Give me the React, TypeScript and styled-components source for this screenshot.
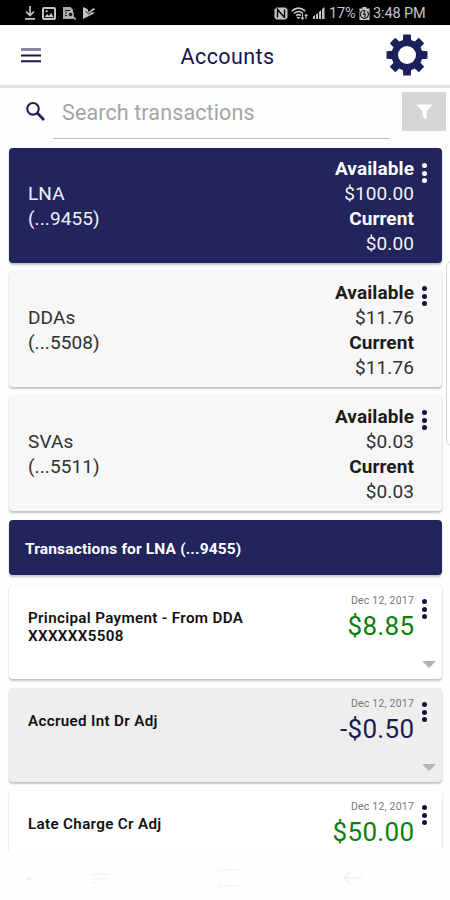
import React from "react";
import styled, { createGlobalStyle, css } from "styled-components";

const navy = "#22245c";
const ink = "#17164a";

const GlobalStyle = createGlobalStyle`
  * { box-sizing: border-box; }
  body { margin: 0; background: #fefefe; font-family: Roboto, "Liberation Sans", sans-serif; }
`;

const Screen = styled.div`
  width: 450px;
  height: 900px;
  display: flex;
  flex-direction: column;
  position: relative;
  overflow: hidden;
  background: #fefefe;
`;

const StatusBar = styled.div`
  height: 25px;
  flex: none;
  background: #000;
  color: #c4c4c4;
  display: flex;
  justify-content: space-between;
  padding: 1px 24px 0 25px;
`;

const StatusGroup = styled.div<{ $gap: number }>`
  display: flex;
  align-items: center;
  gap: ${(p) => p.$gap}px;
`;

const StatusText = styled.span<{ $width: number }>`
  font-size: 14.5px;
  line-height: 26px;
  padding-top: 1px;
  width: ${(p) => p.$width}px;
  white-space: nowrap;
  letter-spacing: -0.1px;
`;

const Header = styled.header`
  height: 63px;
  flex: none;
  background: #fff;
  border-bottom: 3px solid #e2e2e2;
  display: flex;
  align-items: center;
  justify-content: space-between;
  padding: 0 22px 0 21px;
`;

const Title = styled.h1`
  margin: 3px 0 0 28px;
  font-size: 21.5px;
  font-weight: 400;
  letter-spacing: 0.4px;
  color: ${ink};
`;

const SearchRow = styled.div`
  height: 60px;
  flex: none;
  display: flex;
  padding: 4px 4px 0 25px;
`;

const SearchIcon = styled.div`
  padding-top: 9px;
  width: 28px;
`;

const SearchField = styled.div`
  width: 336px;
  height: 47px;
  border-bottom: 1px solid #bdbdbd;
  padding-left: 9px;
  font-size: 21.5px;
  line-height: 41px;
  letter-spacing: 0.12px;
  color: #a5a5a5;
`;

const FilterButton = styled.div`
  width: 44px;
  height: 39px;
  margin-left: auto;
  background: #d5d5d5;
  display: flex;
  align-items: center;
  justify-content: center;
`;

const List = styled.main`
  display: flex;
  flex-direction: column;
  gap: 8px;
  padding: 0 8px 0 9px;
`;

const cardBase = css`
  border-radius: 4px;
  box-shadow: 0 2px 2px rgba(0, 0, 0, 0.22), 0 0 2px rgba(0, 0, 0, 0.08);
  display: flex;
  justify-content: space-between;
`;

const AccountCard = styled.section<{ $selected?: boolean }>`
  ${cardBase}
  height: ${(p) => (p.$selected ? 115 : 116)}px;
  background: ${(p) => (p.$selected ? navy : "#f7f7f7")};
  color: ${(p) => (p.$selected ? "#f1f1f6" : "#303030")};
  padding: ${(p) => (p.$selected ? 8 : 9)}px 14px 0 19px;
  font-size: 19px;
  line-height: 25px;
  letter-spacing: 0.1px;
`;

const AccountName = styled.div`
  padding-top: 25px;
`;

const Balances = styled.div<{ $selected?: boolean }>`
  display: flex;
  flex-direction: column;
  align-items: flex-end;
  margin-left: auto;
  margin-right: 7px;
  b {
    font-weight: 700;
    letter-spacing: 0.1px;
    color: ${(p) => (p.$selected ? "#fff" : "#1c1c1c")};
  }
`;

const Dots = styled.div<{ $light?: boolean; $top: number }>`
  width: 7px;
  margin-top: ${(p) => p.$top}px;
  display: flex;
  flex-direction: column;
  align-items: center;
  gap: 2.5px;
  i {
    width: 5px;
    height: 5px;
    border-radius: 50%;
    background: ${(p) => (p.$light ? "#fff" : "#14143c")};
  }
`;

const SectionBar = styled.h2`
  height: 55px;
  margin: 1px 0 2px;
  border-radius: 4px;
  background: ${navy};
  box-shadow: 0 2px 2px rgba(0, 0, 0, 0.22);
  color: #fff;
  font-size: 15.5px;
  line-height: 58px;
  font-weight: 700;
  letter-spacing: 0.15px;
  padding-left: 16px;
`;

const TransactionCard = styled.article<{ $shaded?: boolean }>`
  ${cardBase}
  height: 94px;
  margin-bottom: 1px;
  background: ${(p) => (p.$shaded ? "#eeeeee" : "#fff")};
  padding: 0 6px 0 19px;
`;

const Description = styled.div`
  width: 230px;
  padding-top: 24px;
  font-size: 15.2px;
  line-height: 18px;
  font-weight: 600;
  letter-spacing: 0.33px;
  color: #111;
`;

const AmountColumn = styled.div`
  margin-left: auto;
  margin-right: 7px;
  display: flex;
  flex-direction: column;
  align-items: flex-end;
`;

const DateText = styled.time`
  font-size: 10.5px;
  line-height: 12px;
  margin-top: 10px;
  letter-spacing: 0.2px;
  color: #777;
`;

const Amount = styled.div<{ $credit?: boolean }>`
  font-size: 26px;
  line-height: 39px;
  letter-spacing: 0.3px;
  margin-right: -0.3px;
  color: ${(p) => (p.$credit ? "#0b800b" : "#1d1c52")};
`;

const RowActions = styled.div`
  width: 15px;
  display: flex;
  flex-direction: column;
  justify-content: space-between;
  padding-bottom: 11px;
`;

const Caret = styled.i`
  align-self: flex-end;
  border: 7px solid transparent;
  border-top-color: #b4b4b4;
  border-bottom: 0;
`;

const NavBar = styled.nav`
  position: absolute;
  left: 0;
  right: 0;
  bottom: 0;
  height: 50px;
  background: #fefefe;
  display: grid;
  grid-template-columns: 67px 126px 125px 19px;
  align-items: center;
  padding: 5px 86px 0 25px;
`;

const ScrollEdge = styled.div`
  position: absolute;
  left: 446px;
  top: 261px;
  width: 12px;
  height: 185px;
  border: 1px solid #d4d4d4;
  border-radius: 6px;
  background: #fff;
`;

const More = ({ light, top }: { light?: boolean; top: number }) => (
  <Dots $light={light} $top={top}>
    <i />
    <i />
    <i />
  </Dots>
);

const accounts = [
  { name: "LNA", number: "(...9455)", available: "$100.00", current: "$0.00", selected: true },
  { name: "DDAs", number: "(...5508)", available: "$11.76", current: "$11.76", selected: false },
  { name: "SVAs", number: "(...5511)", available: "$0.03", current: "$0.03", selected: false },
];

const transactions = [
  { text: "Principal Payment - From DDA XXXXXX5508", amount: "$8.85", credit: true, shaded: false },
  { text: "Accrued Int Dr Adj", amount: "-$0.50", credit: false, shaded: true },
  { text: "Late Charge Cr Adj", amount: "$50.00", credit: true, shaded: false },
];

const StatusIcons = () => (
  <>
    <svg width="10" height="14" viewBox="0 0 10 14" fill="none" stroke="#c4c4c4" strokeWidth="1.7">
      <path d="M5 0v9M1 5.5l4 4 4-4M0 12.8h10" />
    </svg>
    <svg width="14" height="13" viewBox="0 0 14 13">
      <rect x="1" y="1" width="12" height="11" rx="1" fill="none" stroke="#c4c4c4" strokeWidth="2" />
      <path d="M2.5 10.2 5 7l1.8 1.7L9.3 6l2.4 4.2z" fill="#c4c4c4" />
      <circle cx="4.6" cy="4.2" r="1.1" fill="#c4c4c4" />
    </svg>
    <svg width="13" height="13" viewBox="0 0 13 13">
      <path d="M0 0h7.5L10 2.500V12H0z" fill="#a8a8a8" />
      <path d="M2 3.500h5M2 6h2M2 8.500h2" stroke="#222" strokeWidth="1" />
      <circle cx="7.500" cy="7.500" r="2.600" fill="#222" stroke="#c4c4c4" strokeWidth="1.300" />
      <path d="m9.500 9.500 3 3" stroke="#c4c4c4" strokeWidth="1.600" />
    </svg>
    <svg width="13" height="12" viewBox="0 0 13 12">
      <path d="M0 0 4.500 2 5.500 5 10.500 1 12 2.500 9 5.500 12.500 5.800 0 12z" fill="#c4c4c4" />
      <path d="m2.500 4 3 3.200L11 3.200" fill="none" stroke="#222" strokeWidth="1" />
    </svg>
  </>
);

export default function App() {
  return (
    <>
      <GlobalStyle />
      <Screen>
        <StatusBar>
          <StatusGroup $gap={7}>
            <StatusIcons />
          </StatusGroup>
          <StatusGroup $gap={3.5}>
            <svg width="14" height="13" viewBox="0 0 14 13">
              <path d="M2.500.5h9l2 2v8l-2 2h-9l-2-2v-8z" fill="#c4c4c4" />
              <path d="M3.500 10.500v-8l6.500 7.500M10.500 2.500V11" fill="none" stroke="#000" strokeWidth="1.400" />
            </svg>
            <svg width="17" height="13" viewBox="0 0 17 13" fill="none" stroke="#c4c4c4">
              <path d="M.8 4.200Q7.500-2 14.200 4.200M3 6.500q4.500-4 9 0M5.200 8.700q2.300-2 4.600 0" strokeWidth="1.600" />
              <path d="m5.900 9.800 1.600 2 1.200-1.500" fill="#c4c4c4" />
              <path d="M11.500 7v5M10 10.500l1.500 1.700L13 10.500M15 12V7.500M13.800 9 15 7.500 16.500 9" strokeWidth="1.100" />
            </svg>
            <svg width="14" height="12" viewBox="0 0 12 12" fill="#c4c4c4">
              <path d="M0 12V9.500l2-1.500v4zM3 12V7.500L5 6v6zM6 12V5l2-2v9zM9 12V2l2.500-2v12z" />
            </svg>
            <StatusText $width={26}>17%</StatusText>
            <svg width="11" height="13" viewBox="0 0 11 13">
              <path d="M3.500 0h4v1.500h3V13H.5V1.500h3z" fill="#c4c4c4" />
              <path d="M5.500 3.300a4 4 0 1 0 2.800 1.200M6.200 3.500 4.500 7.200h2L5.500 10" fill="none" stroke="#111" strokeWidth="1.100" />
            </svg>
            <StatusText $width={53}>3:48 PM</StatusText>
          </StatusGroup>
        </StatusBar>

        <Header>
          <svg width="20" height="15" viewBox="0 0 20 15">
            <path d="M0 1.500h20" stroke="#8785a3" strokeWidth="3" />
            <path d="M0 7.500h20M0 13.200h20" stroke="#17164a" strokeWidth="2" />
          </svg>
          <Title>Accounts</Title>
          <svg width="42" height="42" viewBox="-21 -21 42 42">
            {[0, 45, 90, 135].map((angle) => (
              <path key={angle} d="M-4.200-14-3.800-20.500h7.600L4.200-14v28l-.4 6.500h-7.600l-.4-6.500z" transform={`rotate(${angle})`} fill="#1d1e5c" />
            ))}
            <circle r="15.500" fill="#1d1e5c" />
            <circle r="9" fill="#fff" />
          </svg>
        </Header>

        <SearchRow>
          <SearchIcon>
            <svg width="21" height="20" viewBox="0 0 21 20" fill="none" stroke="#201f58">
              <circle cx="8" cy="7.800" r="5.800" strokeWidth="2.100" />
              <path d="m12.300 12 6.700 7" strokeWidth="2.700" />
            </svg>
          </SearchIcon>
          <SearchField>Search transactions</SearchField>
          <FilterButton>
            <svg width="17" height="16" viewBox="0 0 18 16" fill="#fff">
              <path d="M0 0h18l-6.700 7.500V16L7 12.500v-5z" />
            </svg>
          </FilterButton>
        </SearchRow>

        <List>
          {accounts.map((a) => (
            <AccountCard key={a.name} $selected={a.selected}>
              <AccountName>
                {a.name}
                <br />
                {a.number}
              </AccountName>
              <Balances $selected={a.selected}>
                <b>Available</b>
                <span>{a.available}</span>
                <b>Current</b>
                <span>{a.current}</span>
              </Balances>
              <More light={a.selected} top={a.selected ? 7 : 6} />
            </AccountCard>
          ))}
          <SectionBar>Transactions for LNA (...9455)</SectionBar>
          {transactions.map((t) => (
            <TransactionCard key={t.text} $shaded={t.shaded}>
              <Description>{t.text}</Description>
              <AmountColumn>
                <DateText>Dec 12, 2017</DateText>
                <Amount $credit={t.credit}>{t.amount}</Amount>
              </AmountColumn>
              <RowActions>
                <More top={14} />
                <Caret />
              </RowActions>
            </TransactionCard>
          ))}
        </List>

        <ScrollEdge />
        <NavBar>
          <svg width="8" height="6" viewBox="0 0 8 6">
            <path d="M0 3h8L4 6z" fill="#f0f0f0" />
          </svg>
          <svg width="18" height="12" viewBox="0 0 18 12" fill="none" stroke="#f3f3f3" strokeWidth="1.500">
            <path d="M1 2h17M0 7h16M0 11h5" />
          </svg>
          <svg width="20" height="18" viewBox="0 0 20 18" fill="none" stroke="#f4f4f4" strokeWidth="1.500">
            <path d="M1 5V1h18v1M1 13v4h18v-1" />
          </svg>
          <svg width="19" height="16" viewBox="0 0 19 16" fill="none" stroke="#f0f0f0" strokeWidth="1.300">
            <path d="M19 8H1M8 1 1 8l7 7" />
          </svg>
        </NavBar>
      </Screen>
    </>
  );
}
